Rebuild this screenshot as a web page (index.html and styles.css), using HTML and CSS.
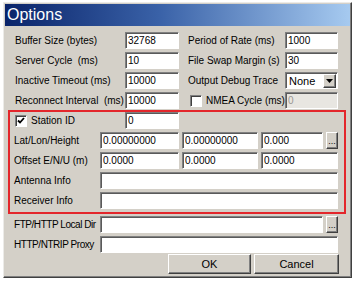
FILE: index.html
```html
<!DOCTYPE html>
<html lang="en">
<head>
    <meta charset="UTF-8">
    <title>Options</title>
    <link rel="stylesheet" href="styles.css">
</head>
<body>
    <div class="dialog">
        <div class="titlebar">Options</div>
        <div class="content">
            <div class="general">
                <label class="lbl">Buffer Size (bytes)</label>
                <input class="edit" type="text" value="32768">
                <label class="lbl lbl2">Period of Rate (ms)</label>
                <input class="edit" type="text" value="1000">

                <label class="lbl">Server Cycle&nbsp; (ms)</label>
                <input class="edit" type="text" value="10">
                <label class="lbl lbl2">File Swap Margin (s)</label>
                <input class="edit" type="text" value="30">

                <label class="lbl">Inactive Timeout (ms)</label>
                <input class="edit" type="text" value="10000">
                <label class="lbl lbl2">Output Debug Trace</label>
                <div class="combo">
                    <span class="combo-text">None</span>
                    <span class="drop">
                        <svg width="7" height="4" viewBox="0 0 7 4"><path d="M0 0h7L3.5 4z" fill="#000"/></svg>
                    </span>
                </div>

                <label class="lbl">Reconnect Interval&nbsp; (ms)</label>
                <input class="edit" type="text" value="10000">
                <label class="lbl lbl2 check-lbl"><span class="check"></span>NMEA Cycle (ms)</label>
                <input class="edit disabled" type="text" value="0" disabled>
            </div>

            <div class="station">
                <div class="row">
                    <label class="lbl station-lbl check-lbl">
                        <span class="check">
                            <svg width="8" height="8" viewBox="0 0 8 8"><path d="M1 3.5l2 2 4-4.5" stroke="#000" stroke-width="1.8" fill="none"/></svg>
                        </span>Station ID
                    </label>
                    <input class="edit w54" type="text" value="0">
                </div>
                <div class="row">
                    <label class="lbl field-lbl">Lat/Lon/Height</label>
                    <input class="edit w79" type="text" value="0.00000000">
                    <input class="edit w76" type="text" value="0.00000000">
                    <input class="edit w62" type="text" value="0.000">
                    <button class="dots">...</button>
                </div>
                <div class="row">
                    <label class="lbl field-lbl">Offset E/N/U (m)</label>
                    <input class="edit w79" type="text" value="0.0000">
                    <input class="edit w76" type="text" value="0.0000">
                    <input class="edit w77" type="text" value="0.0000">
                </div>
                <div class="row">
                    <label class="lbl field-lbl">Antenna Info</label>
                    <input class="edit wide" type="text" value="">
                </div>
                <div class="row">
                    <label class="lbl field-lbl">Receiver Info</label>
                    <input class="edit wide" type="text" value="">
                </div>
            </div>

            <div class="row outer-row first">
                <label class="lbl field-lbl tight">FTP/HTTP Local Dir</label>
                <input class="edit w223" type="text" value="">
                <button class="dots">...</button>
            </div>
            <div class="row outer-row last">
                <label class="lbl field-lbl tight">HTTP/NTRIP Proxy</label>
                <input class="edit wide" type="text" value="">
            </div>

            <div class="actions">
                <button class="btn ok">OK</button>
                <button class="btn cancel">Cancel</button>
            </div>
        </div>
    </div>
</body>
</html>
```

FILE: styles.css
```css
*{
    box-sizing: border-box;
}
body{
    margin: 0;
    background: #fff;
    font-family: "Liberation Sans", Arial, sans-serif;
    font-size: 10px;
    color: #000;
}
.dialog{
    margin: 2px 0 0 3px;
    width: 349px;
    height: 276px;
    padding: 1px;
    background: #d4d0c8;
    border: 1px solid;
    border-color: #ecebe8 #404040 #404040 #ecebe8;
    box-shadow: inset -1px -1px #808080;
}
.titlebar{
    height: 22px;
    line-height: 22px;
    padding-left: 2px;
    color: #fff;
    font-size: 16px;
    background: linear-gradient(to right, #0a246a, #3a62a8 45%, #a6caf0);
}
.content{
    padding: 6px 0 0 3px;
}
.general{
    display: grid;
    grid-template-columns: 117px 54px 106px 53px;
    grid-auto-rows: 17px;
    row-gap: 3px;
    margin-bottom: 1px;
}
.lbl{
    display: flex;
    align-items: center;
    white-space: nowrap;
}
.general .lbl{
    padding-left: 7px;
}
.general .lbl2{
    padding-left: 9px;
}
.edit{
    height: 17px;
    width: 100%;
    margin: 0;
    padding: 0 0 0 2px;
    font: inherit;
    color: #000;
    background: #fff;
    border: 1px solid;
    border-color: #808080 #fff #fff #808080;
    box-shadow: inset 1px 1px #5a5a5a;
    outline: none;
}
.edit.disabled{
    background: #e8e6e1;
    color: #9a9893;
}
.combo{
    display: flex;
    height: 17px;
    background: #fff;
    border: 1px solid;
    border-color: #808080 #fff #fff #808080;
    box-shadow: inset 1px 1px #5a5a5a;
    padding: 1px 1px 0 1px;
}
.combo-text{
    flex: 1;
    padding-left: 2px;
    line-height: 14px;
    font-size: 11px;
}
.drop{
    width: 13px;
    height: 14px;
    display: flex;
    align-items: center;
    justify-content: center;
    background: #d4d0c8;
    border: 1px solid;
    border-color: #fff #404040 #404040 #fff;
    box-shadow: inset -1px -1px #808080;
}
.check-lbl .check{
    margin-right: 4px;
}
.check{
    width: 12px;
    height: 12px;
    display: inline-flex;
    align-items: center;
    justify-content: center;
    background: #fff;
    border: 1px solid;
    border-color: #808080 #fff #fff #808080;
    box-shadow: inset 1px 1px #404040;
}
.general .check-lbl{
    padding-left: 11px;
}
.station{
    width: 338px;
    border: 2px solid #e3262b;
    padding: 0 6px 0 4px;
}
.row{
    display: flex;
    gap: 3px;
    height: 17px;
    margin-bottom: 3px;
}
.field-lbl{
    width: 86px;
    margin-right: -3px;
}
.field-lbl.tight{
    letter-spacing: -0.45px;
}
.station-lbl{
    width: 111px;
    padding-left: 1px;
    margin-right: -3px;
}
.w54{ width: 54px; }
.w79{ width: 79px; }
.w76{ width: 76px; }
.w62{ width: 62px; }
.w77{ width: 77px; }
.w223{ width: 223px; }
.wide{ width: 238px; }
.outer-row{
    padding-left: 6px;
}
.outer-row.first{
    margin-top: 2px;
}
.outer-row.last{
    margin-bottom: 1px;
}
.dots, .btn{
    margin: 0;
    padding: 0;
    font: inherit;
    color: #000;
    background: #d4d0c8;
    border: 1px solid;
    border-color: #fff #404040 #404040 #fff;
    box-shadow: inset -1px -1px #808080;
}
.dots{
    width: 12px;
    height: 17px;
    font-size: 9px;
    line-height: 14px;
}
.actions{
    display: flex;
    gap: 3px;
    padding-left: 160px;
}
.btn{
    height: 20px;
    font-size: 11px;
}
.ok{
    width: 83px;
}
.cancel{
    width: 85px;
}
```
